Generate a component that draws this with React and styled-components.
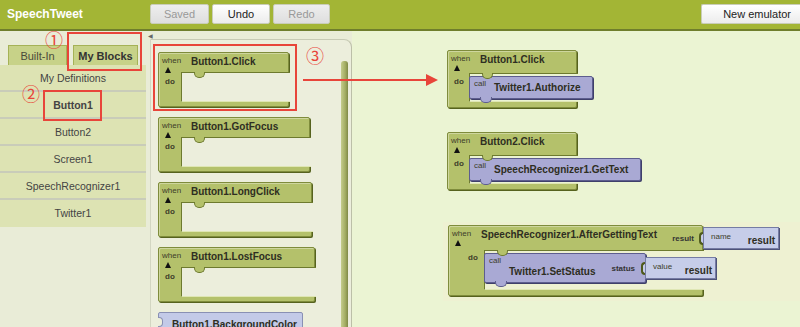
import React from 'react'
import styled, { createGlobalStyle } from 'styled-components'

const GREEN = '#b4c16b'
const GREEN_EDGE = '#6d7a2e'
const PURPLE = '#a9a9d4'
const LAVENDER = '#c6cde9'
const RED = '#e8453a'

const GlobalStyle = createGlobalStyle`
    html, body {
        margin: 0;
        padding: 0;
    }
    body {
        font-family: 'Liberation Sans', Arial, sans-serif;
        overflow: hidden;
    }
    * {
        box-sizing: border-box;
    }
`

const Page = styled.div`
    width: 800px;
    height: 327px;
    display: flex;
    flex-direction: column;
    overflow: hidden;
`

const TopBar = styled.header`
    flex: none;
    height: 31px;
    display: flex;
    align-items: center;
    padding: 0 0 2px 7px;
    background: #a3b535;
    border-bottom: 2px solid #6f7e2c;
`

const AppTitle = styled.div`
    width: 143px;
    color: #fff;
    font-size: 12px;
    font-weight: bold;
`

const ToolGroup = styled.div`
    display: flex;
    gap: 3px;
`

const ToolButton = styled.button`
    width: ${p => p.$w}px;
    height: 20px;
    padding: 0;
    font-family: inherit;
    font-size: 11px;
    color: ${p => (p.$enabled ? '#222' : '#999')};
    background: ${p =>
        p.$enabled
            ? 'linear-gradient(#ffffff, #ececec)'
            : 'linear-gradient(#eeeeee, #dedede)'};
    border: 1px solid #c9cdb8;
    border-radius: 2px;
`

const EmulatorButton = styled(ToolButton)`
    margin-left: auto;
    border-radius: 2px 0 0 2px;
    border-right: none;
    text-align: right;
    padding-right: 9px;
`

const Main = styled.div`
    position: relative;
    flex: 1;
    display: flex;
    min-height: 0;
`

const Sidebar = styled.aside`
    width: 148px;
    flex: none;
    padding-top: 14px;
    background: #e9ecd7;
`

const TabRow = styled.div`
    display: flex;
    gap: 6px;
    padding-left: 8px;
`

const Tab = styled.div`
    width: ${p => p.$w}px;
    height: 20px;
    display: flex;
    align-items: center;
    justify-content: center;
    font-size: 11px;
    font-weight: ${p => (p.$active ? 'bold' : 'normal')};
    color: ${p => (p.$active ? '#333' : '#4a4a3a')};
    background: #c7d288;
    border: 1px solid #a5b256;
    border-bottom: none;
`

const DrawerList = styled.ul`
    width: 146px;
    margin: 0;
    padding: 0;
    list-style: none;
    background: #dde3b3;
`

const DrawerItem = styled.li`
    height: 27px;
    display: flex;
    align-items: center;
    justify-content: center;
    font-size: 10.5px;
    font-weight: ${p => (p.$active ? 'bold' : 'normal')};
    color: #444;
    border-bottom: 2px solid ${p => (p.$last ? 'transparent' : '#c9ccb9')};
`

const Drawer = styled.section`
    position: relative;
    width: 204px;
    flex: none;
    display: flex;
    flex-direction: column;
    padding: 8px 0 0 2px;
    background: #e9ecd7;
`

const DrawerToggle = styled.span`
    position: absolute;
    left: 0;
    top: 1px;
    font-size: 6px;
    color: #666;
`

const DrawerPanel = styled.div`
    flex: 1;
    display: flex;
    min-height: 0;
    padding: 12px 0 0 7px;
    background: #eceedc;
    border-top: 1px solid #c7cab4;
    border-left: 1px solid #d3d6c2;
    border-right: 1px solid #bcbfa8;
    border-top-right-radius: 8px;
    overflow: hidden;
`

const DrawerBlocks = styled.div`
    display: flex;
    flex-direction: column;
    gap: 10px;
`

const Scrollbar = styled.div`
    width: 7px;
    flex: none;
    margin: 9px 3px 0 auto;
    background: linear-gradient(to right, #c4cc8c, #a3ad63 60%, #7f8946);
    border-radius: 3px 3px 0 0;
`

const Workspace = styled.main`
    position: relative;
    flex: 1;
    background: #ebf4d3;
`

const CanvasItem = styled.div`
    position: absolute;
    left: ${p => p.$x}px;
    top: ${p => p.$y}px;
`

const Band = styled.div`
    position: absolute;
    left: 91px;
    top: 191px;
    right: 0;
    height: 79px;
    background: #eef1d2;
`

/* ---------- blocks ---------- */

const Event = styled.div`
    position: relative;
    width: ${p => p.$w}px;
    display: flex;
    flex-direction: column;
    background: ${GREEN};
    border: 1px solid #7f8c3c;
    border-radius: 2px;
    box-shadow: 1px 1px 0 #56621e, inset 1px 1px 0 rgba(255, 255, 255, 0.35);
`

const EventHead = styled.div`
    height: ${p => p.$h}px;
    display: flex;
    align-items: flex-start;
    padding: 3px 0 0 ${p => p.$pad}px;
`

const WhenMark = styled.div`
    width: ${p => p.$w}px;
    flex: none;
    display: flex;
    flex-direction: column;
    align-items: flex-start;
    gap: 2px;
`

const Small = styled.span`
    font-size: 8px;
    line-height: 9px;
    color: #3d3d2a;
`

const Tri = styled.span`
    margin-left: 3px;
    width: 0;
    height: 0;
    border-left: 3px solid transparent;
    border-right: 3px solid transparent;
    border-bottom: 6px solid #111;
`

const BlockName = styled.span`
    font-size: 10px;
    line-height: 12px;
    font-weight: bold;
    color: #2e2e22;
    white-space: nowrap;
    margin-top: ${p => p.$top || 0}px;
`

const EventBody = styled.div`
    display: flex;
`

const Spine = styled.div`
    width: ${p => p.$w}px;
    flex: none;
    display: flex;
    align-items: flex-start;
    padding: ${p => p.$doTop}px 0 0 ${p => p.$doLeft}px;
`

const DoLabel = styled.span`
    font-size: 8px;
    line-height: 9px;
    font-weight: bold;
    color: #3d3d2a;
`

const Slot = styled.div`
    position: relative;
    flex: 1;
    min-width: 0;
    display: flex;
    align-items: flex-start;
    min-height: ${p => p.$h}px;
    margin-right: -2px;
    padding-top: 2px;
    background: ${p => p.$bg};
    border-top: 1px solid ${GREEN_EDGE};
    border-left: 1px solid ${GREEN_EDGE};
    border-bottom: 1px solid #dfe6b4;

    &::before {
        content: '';
        position: absolute;
        top: -1px;
        left: 12px;
        width: 9px;
        height: 5px;
        background: ${GREEN};
        border: 1px solid ${GREEN_EDGE};
        border-top: none;
        border-radius: 0 0 5px 5px;
        z-index: 2;
    }
`

const EventFoot = styled.div`
    height: ${p => p.$h}px;
`

const Call = styled.div`
    position: relative;
    flex: none;
    width: ${p => p.$w}px;
    height: ${p => p.$h}px;
    margin-left: -1px;
    display: flex;
    align-items: flex-start;
    padding: 2px 0 0 4px;
    background: ${PURPLE};
    border: 1px solid #5d5d8e;
    border-radius: 2px;
    box-shadow: 1px 1px 0 #3f3f6a;

    &::after {
        content: '';
        position: absolute;
        bottom: -5px;
        left: 10px;
        width: 10px;
        height: 5px;
        background: ${PURPLE};
        border: 1px solid #5d5d8e;
        border-top: none;
        border-radius: 0 0 5px 5px;
    }
`

const CallTag = styled(Small)`
    width: 20px;
    flex: none;
`

const ParamGroup = styled.div`
    display: flex;
    align-items: center;
    margin-left: auto;
    margin-right: ${p => -p.$over}px;
    margin-top: ${p => p.$top}px;
`

const ParamLabel = styled.span`
    font-size: 8px;
    font-weight: bold;
    color: #333;
    margin-right: ${p => p.$gap}px;
`

const Socket = styled.span`
    width: 5px;
    height: 13px;
    margin-right: -1px;
    background: ${LAVENDER};
    border: 2px solid #4f5a1c;
    border-right: none;
    border-radius: 4px 0 0 4px;
`

const Plug = styled.div`
    width: ${p => p.$w}px;
    height: ${p => p.$h}px;
    display: flex;
    justify-content: space-between;
    padding: 2px 3px 1px 7px;
    background: ${LAVENDER};
    border: 1px solid #757ba3;
    box-shadow: 1px 1px 0 #4d5278;
`

const PlugTag = styled(Small)`
    align-self: flex-start;
    margin-top: 2px;
`

const PlugValue = styled(BlockName)`
    align-self: flex-end;
`

const Getter = styled.div`
    position: relative;
    width: ${p => p.$w}px;
    height: 24px;
    flex: none;
    display: flex;
    align-items: flex-start;
    padding: 6px 0 0 13px;
    background: #c3cae8;
    border: 1px solid #8990b4;
    border-radius: 2px;

    &::before {
        content: '';
        position: absolute;
        left: -1px;
        top: 4px;
        width: 4px;
        height: 8px;
        background: #eceedc;
        border: 1px solid #8990b4;
        border-left: none;
        border-radius: 0 4px 4px 0;
    }
`

/* ---------- annotations ---------- */

const MarkBox = styled.div`
    position: absolute;
    left: ${p => p.$x}px;
    top: ${p => p.$y}px;
    width: ${p => p.$w}px;
    height: ${p => p.$h}px;
    border: 2px solid ${RED};
    pointer-events: none;
`

const MarkNum = styled.span`
    position: absolute;
    left: ${p => p.$x}px;
    top: ${p => p.$y}px;
    font-family: 'Noto Sans CJK JP', 'DejaVu Sans', sans-serif;
    font-size: 18px;
    line-height: 18px;
    color: ${RED};
`

const ArrowSvg = styled.svg`
    position: absolute;
    left: 300px;
    top: 42px;
`

const EventBlock = ({ w, head = 19, slot = 30, foot = 4, spine = 22, doLeft = 6, doTop = 6, bg, name, param, children }) => (
    <Event $w={w}>
        <EventHead $h={head} $pad={3}>
            <WhenMark $w={29}>
                <Small>when</Small>
                <Tri />
            </WhenMark>
            <BlockName>{name}</BlockName>
            {param}
        </EventHead>
        <EventBody>
            <Spine $w={spine} $doLeft={doLeft} $doTop={doTop}>
                <DoLabel>do</DoLabel>
            </Spine>
            <Slot $h={slot} $bg={bg}>
                {children}
            </Slot>
        </EventBody>
        <EventFoot $h={foot} />
    </Event>
)

const paletteEvents = [
    { name: 'Button1.Click', w: 131 },
    { name: 'Button1.GotFocus', w: 152 },
    { name: 'Button1.LongClick', w: 154 },
    { name: 'Button1.LostFocus', w: 157 },
]

const components = ['My Definitions', 'Button1', 'Button2', 'Screen1', 'SpeechRecognizer1', 'Twitter1']

export default function App() {
    return (
        <Page>
            <GlobalStyle />
            <TopBar>
                <AppTitle>SpeechTweet</AppTitle>
                <ToolGroup>
                    <ToolButton $w={59}>Saved</ToolButton>
                    <ToolButton $w={58} $enabled>Undo</ToolButton>
                    <ToolButton $w={57}>Redo</ToolButton>
                </ToolGroup>
                <EmulatorButton $w={99} $enabled>New emulator</EmulatorButton>
            </TopBar>

            <Main>
                <Sidebar>
                    <TabRow>
                        <Tab $w={59}>Built-In</Tab>
                        <Tab $w={65} $active>My Blocks</Tab>
                    </TabRow>
                    <DrawerList>
                        {components.map((c, i) => (
                            <DrawerItem key={c} $active={c === 'Button1'} $last={i === components.length - 1}>
                                {c}
                            </DrawerItem>
                        ))}
                    </DrawerList>
                </Sidebar>

                <Drawer>
                    <DrawerToggle>◀</DrawerToggle>
                    <DrawerPanel>
                        <DrawerBlocks>
                            {paletteEvents.map(ev => (
                                <EventBlock key={ev.name} name={ev.name} w={ev.w} doTop={5} bg="#eceedc" />
                            ))}
                            <Getter $w={145}>
                                <BlockName>Button1.BackgroundColor</BlockName>
                            </Getter>
                        </DrawerBlocks>
                        <Scrollbar />
                    </DrawerPanel>
                </Drawer>

                <Workspace>
                    <Band />
                    <CanvasItem $x={95} $y={19}>
                        <EventBlock name="Button1.Click" w={130} head={22} slot={29} foot={5} spine={21} doLeft={6} doTop={4} bg="#ebf4d3">
                            <Call $w={124} $h={23}>
                                <CallTag>call</CallTag>
                                <BlockName $top={3}>Twitter1.Authorize</BlockName>
                            </Call>
                        </EventBlock>
                    </CanvasItem>
                    <CanvasItem $x={95} $y={101}>
                        <EventBlock name="Button2.Click" w={130} head={22} slot={29} foot={5} spine={21} doLeft={6} doTop={4} bg="#ebf4d3">
                            <Call $w={172} $h={23}>
                                <CallTag>call</CallTag>
                                <BlockName $top={3}>SpeechRecognizer1.GetText</BlockName>
                            </Call>
                        </EventBlock>
                    </CanvasItem>
                    <CanvasItem $x={96} $y={194}>
                        <EventBlock
                            name="SpeechRecognizer1.AfterGettingText"
                            w={255}
                            head={24}
                            slot={40}
                            foot={5}
                            spine={35}
                            doLeft={19}
                            doTop={3}
                            bg="#eef1d2"
                            param={
                                <ParamGroup $over={77} $top={-2}>
                                    <ParamLabel $gap={5}>result</ParamLabel>
                                    <Socket />
                                    <Plug $w={76} $h={22}>
                                        <PlugTag>name</PlugTag>
                                        <PlugValue>result</PlugValue>
                                    </Plug>
                                </ParamGroup>
                            }
                        >
                            <Call $w={162} $h={30}>
                                <CallTag>call</CallTag>
                                <BlockName $top={10}>Twitter1.SetStatus</BlockName>
                                <ParamGroup $over={71} $top={1}>
                                    <ParamLabel $gap={6}>status</ParamLabel>
                                    <Socket />
                                    <Plug $w={71} $h={22}>
                                        <PlugTag>value</PlugTag>
                                        <PlugValue>result</PlugValue>
                                    </Plug>
                                </ParamGroup>
                            </Call>
                        </EventBlock>
                    </CanvasItem>
                </Workspace>

                <MarkNum $x={45} $y={-1}>①</MarkNum>
                <MarkBox $x={67} $y={1} $w={75} $h={39} />
                <MarkNum $x={22} $y={53}>②</MarkNum>
                <MarkBox $x={43} $y={59} $w={59} $h={31} />
                <MarkBox $x={153} $y={13} $w={144} $h={67} />
                <MarkNum $x={306} $y={15}>③</MarkNum>
                <ArrowSvg width="140" height="14" viewBox="0 0 140 14">
                    <line x1="3" y1="7" x2="128" y2="7" stroke={RED} strokeWidth="2" />
                    <polygon points="126,1 138,7 126,13" fill={RED} />
                </ArrowSvg>
            </Main>
        </Page>
    )
}
